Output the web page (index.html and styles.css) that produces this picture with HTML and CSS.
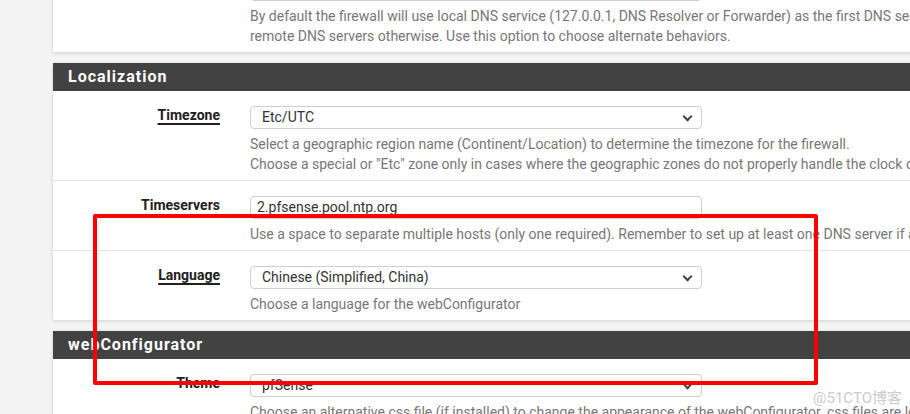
FILE: index.html
```html
<!DOCTYPE html>
<html lang="en">
<head>
    <meta charset="UTF-8">
    <title>General Setup</title>
    <link rel="stylesheet" href="styles.css">
</head>
<body>
    <div class="content">
        <section class="panel panel-cut">
            <div class="row row-last">
                <div class="label"></div>
                <div class="control">
                    <div class="select"></div>
                    <p class="help">By default the firewall will use local DNS service (127.0.0.1, DNS Resolver or Forwarder) as the first DNS server when possible. It will fall back to<br>remote DNS servers otherwise. Use this option to choose alternate behaviors.</p>
                </div>
            </div>
        </section>

        <section class="panel">
            <h2 class="panel-title">Localization</h2>
            <div class="row">
                <div class="label"><span class="help-link">Timezone</span></div>
                <div class="control">
                    <div class="select">Etc/UTC</div>
                    <p class="help">Select a geographic region name (Continent/Location) to determine the timezone for the firewall.<br>Choose a special or "Etc" zone only in cases where the geographic zones do not properly handle the clock offset required for this firewall.</p>
                </div>
            </div>
            <div class="row">
                <div class="label">Timeservers</div>
                <div class="control">
                    <div class="input">2.pfsense.pool.ntp.org</div>
                    <p class="help">Use a space to separate multiple hosts (only one required). Remember to set up at least one DNS server if a host name is entered here!</p>
                </div>
            </div>
            <div class="row row-last">
                <div class="label"><span class="help-link">Language</span></div>
                <div class="control">
                    <div class="select">Chinese (Simplified, China)</div>
                    <p class="help">Choose a language for the webConfigurator</p>
                </div>
            </div>
        </section>

        <section class="panel">
            <h2 class="panel-title">webConfigurator</h2>
            <div class="row row-last">
                <div class="label">Theme</div>
                <div class="control">
                    <div class="select">pfSense</div>
                    <p class="help">Choose an alternative css file (if installed) to change the appearance of the webConfigurator. css files are located in /usr/local/www/css/</p>
                </div>
            </div>
        </section>
    </div>

    <div class="mark-box"></div>
    <div class="watermark">@51CTO博客</div>
</body>
</html>
```

FILE: styles.css
```css
html, body {
    margin: 0;
    padding: 0;
    background: #f4f4f4;
    font-family: Roboto, "Noto Sans CJK SC", sans-serif;
    font-size: 14px;
    color: #212121;
    overflow: hidden;
    height: 414px;
    position: relative;
}

.content {
    margin-left: 53px;
    width: 1200px;
}

.panel {
    background: #fff;
    margin-bottom: 11px;
    box-shadow: 0 1px 4px rgba(0, 0, 0, 0.15);
}

.panel-cut {
    margin-top: -37px;
}

.panel-title {
    margin: 0;
    height: 28px;
    line-height: 28px;
    padding-left: 15px;
    background: #424242;
    color: #fff;
    font-size: 16px;
    font-weight: bold;
    letter-spacing: 1px;
}

.row {
    display: grid;
    grid-template-columns: 167px 1fr;
    column-gap: 30px;
    padding: 15px 0 6px;
    border-bottom: 1px solid #e4e4e4;
}

.row-last {
    border-bottom: none;
}

.label {
    text-align: right;
    font-weight: bold;
    line-height: 18px;
    color: #212121;
}

.help-link {
    text-decoration: underline;
    text-underline-offset: 3px;
    text-decoration-thickness: 2px;
}

.select, .input {
    box-sizing: border-box;
    width: 452px;
    height: 23px;
    border: 1px solid #cfcfcf;
    border-radius: 4px;
    color: #333;
    font-size: 14px;
    line-height: 21px;
    padding-left: 11px;
    white-space: nowrap;
    position: relative;
}

.input {
    padding-left: 6px;
}

.select::after {
    content: "";
    position: absolute;
    right: 10px;
    top: 6px;
    width: 5px;
    height: 5px;
    border-right: 2px solid #444;
    border-bottom: 2px solid #444;
    transform: rotate(45deg);
}

.help {
    margin: 5px 0 0;
    line-height: 20px;
    color: #777;
    white-space: nowrap;
}

.mark-box {
    position: absolute;
    left: 93px;
    top: 214px;
    width: 717px;
    height: 163px;
    border: 4px solid #ff0000;
    border-radius: 2px;
}

.watermark {
    position: absolute;
    left: 813px;
    top: 386px;
    font-size: 15px;
    color: #cccccc;
    font-family: Roboto, "Noto Sans CJK SC", sans-serif;
}
```
